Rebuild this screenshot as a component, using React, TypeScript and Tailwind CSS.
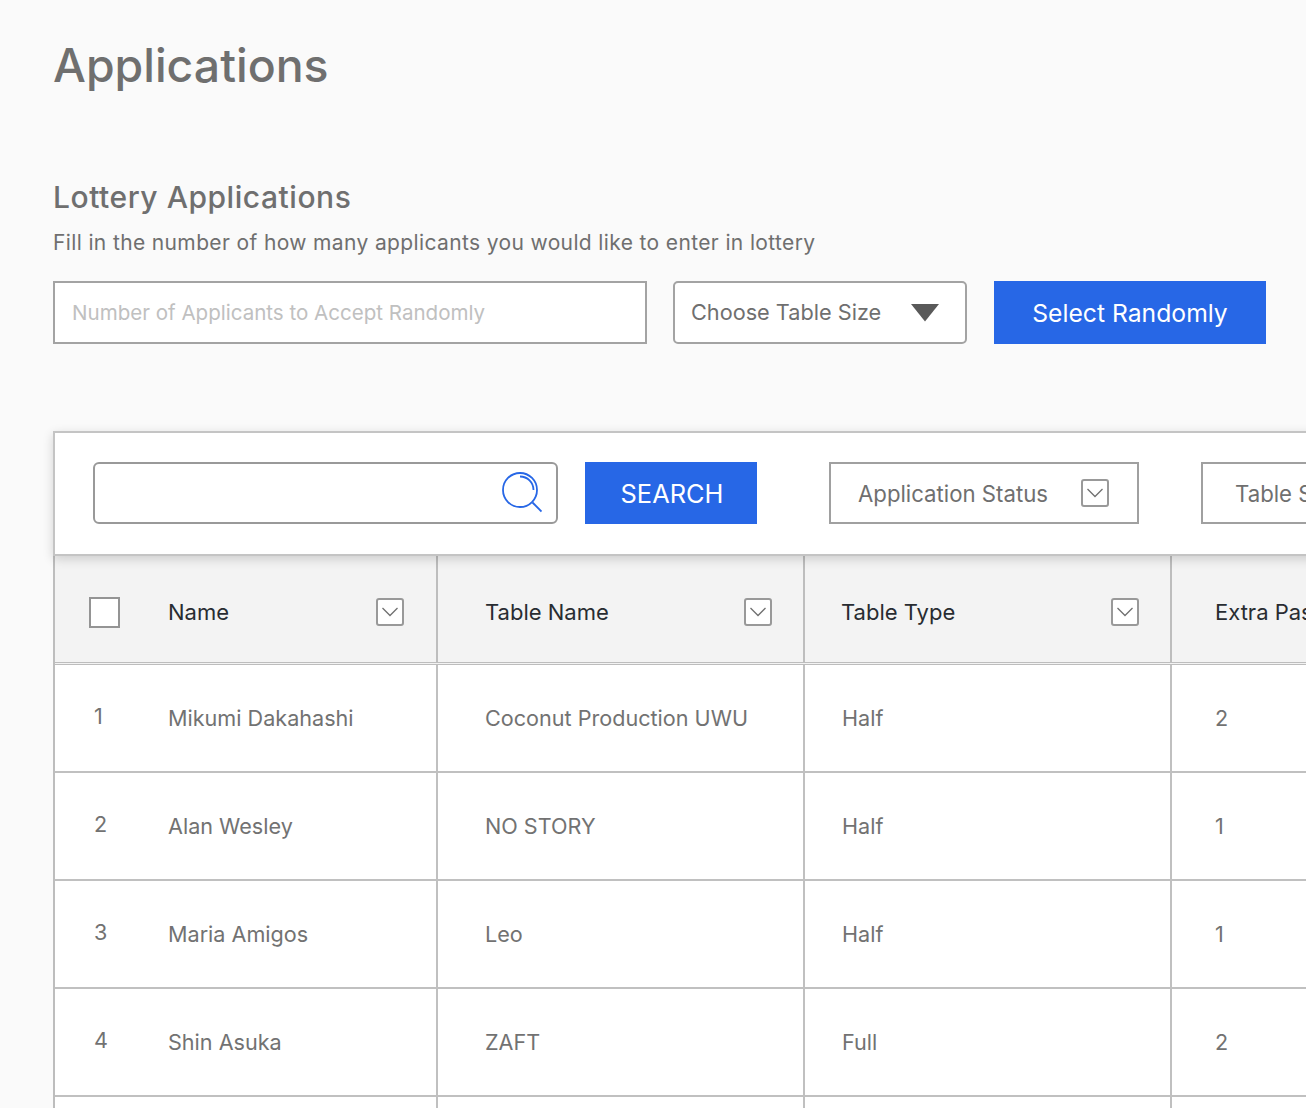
import { useState } from "react";

const rows = [
  { id: 1, name: "Mikumi Dakahashi", table: "Coconut Production UWU", type: "Half", extra: "2" },
  { id: 2, name: "Alan Wesley", table: "NO STORY", type: "Half", extra: "1" },
  { id: 3, name: "Maria Amigos", table: "Leo", type: "Half", extra: "1" },
  { id: 4, name: "Shin Asuka", table: "ZAFT", type: "Full", extra: "2" },
  { id: 5, name: "", table: "", type: "", extra: "" },
];

function Caret() {
  return (
    <span className="flex h-7 w-7 shrink-0 items-center justify-center rounded-[3px] border-2 border-[#999999] bg-white">
      <svg width="16" height="10" viewBox="0 0 16 10" fill="none">
        <path d="M0.500 1 8 8.500 15.500 1" stroke="#707070" strokeWidth="1.300" />
      </svg>
    </span>
  );
}

function Filter({ label, className }: { label: string; className: string }) {
  return (
    <div className={`flex h-[62px] shrink-0 items-center justify-between border-2 border-[#a0a0a0] bg-white pr-[28px] text-[22.200px] text-[#6f6f6f] ${className}`}>
      <span className="whitespace-nowrap pt-[3px]">{label}</span>
      <Caret />
    </div>
  );
}

export default function App() {
  const [count, setCount] = useState("");

  return (
    <div className="h-[1108px] w-[1306px] overflow-hidden bg-[#fafafa] pl-[53px] pt-[35px] font-['Inter',sans-serif] text-[#6f6f6f]">
      <h1 className="text-[46.400px] leading-[60px] font-[450]">Applications</h1>

      <h2 className="mt-[83px] text-[30px] leading-[38px] font-[450] tracking-[0.018em]">Lottery Applications</h2>
      <p className="mt-[12px] text-[21px] leading-[30px] tracking-[0.0175em]">
        Fill in the number of how many applicants you would like to enter in lottery
      </p>

      <div className="mt-[23px] flex h-[63px] w-[1213px] items-stretch">
        <input
          value={count}
          onChange={(e) => setCount(e.target.value)}
          placeholder="Number of Applicants to Accept Randomly"
          className="w-[594px] border-2 border-[#a3a3a3] bg-white px-[17px] pt-[2px] text-[20.550px] outline-none placeholder:text-[#c0c0c0]"
        />
        <div className="ml-[26px] flex w-[294px] items-center justify-between rounded-[5px] border-2 border-[#a3a3a3] bg-white pl-[16px] pr-[26px] text-[21.700px]">
          <span className="whitespace-nowrap">Choose Table Size</span>
          <svg width="28" height="19" viewBox="0 0 28 19">
            <path d="M0 1h28L14 18.500z" fill="#595959" />
          </svg>
        </div>
        <button className="ml-[27px] w-[272px] bg-[#2767e6] pt-[3px] text-[24.700px] text-white">Select Randomly</button>
      </div>

      <div className="mt-[87px] w-[1560px] border-l-2 border-[#bdbdbd]">
        <div className="relative z-10 -ml-[2px] flex h-[125px] items-center border-l-2 border-t-2 border-b-2 border-[#c4c4c4] bg-white pb-[2px] pl-[38px] shadow-[0_3px_10px_rgba(0,0,0,0.16)]">
          <div className="flex h-[62px] w-[465px] items-center justify-end rounded-[6px] border-2 border-[#999999] pr-[14px]">
            <svg width="42" height="42" viewBox="0 0 42 42" fill="none" stroke="#2767e6" strokeWidth="1.800">
              <circle cx="20" cy="18" r="17" />
              <path d="M20 4.500A13.500 13.500 0 0 1 33.500 18" />
              <path d="M32.500 30.500 41.500 39.500" />
            </svg>
          </div>
          <button className="ml-[27px] h-[62px] w-[172px] bg-[#2767e6] pl-[2px] pt-[4px] text-[25.400px] text-white">SEARCH</button>
          <Filter label="Application Status" className="ml-[72px] w-[310px] pl-[27px]" />
          <Filter label="Table Size" className="ml-[62px] w-[310px] pl-[32px]" />
        </div>

        <div className="grid h-[109px] grid-cols-[383px_367px_367px_367px] border-b-[3px] border-double border-[#bdbdbd] bg-[#f3f3f3] text-[22px] text-[#282c31]">
          <div className="flex items-center border-r-2 border-[#bdbdbd] pl-[34px] pr-[32px] pt-[6px]">
            <span className="h-[31px] w-[31px] shrink-0 border-2 border-[#949494] bg-white" />
            <span className="ml-[48px] flex-1">Name</span>
            <Caret />
          </div>
          <div className="flex items-center justify-between border-r-2 border-[#bdbdbd] pl-[47px] pr-[31px] pt-[6px]">
            <span>Table Name</span>
            <Caret />
          </div>
          <div className="flex items-center justify-between border-r-2 border-[#bdbdbd] pl-[36px] pr-[31px] pt-[6px]">
            <span>Table Type</span>
            <Caret />
          </div>
          <div className="flex items-center whitespace-nowrap pl-[43px] pt-[6px]">Extra Passes</div>
        </div>

        {rows.map((row) => (
          <div
            key={row.id}
            className="grid h-[108px] grid-cols-[383px_367px_367px_367px] border-b-2 border-[#c0c0c0] bg-white text-[21.600px] text-[#727272]"
          >
            <div className="flex items-center border-r-2 border-[#c0c0c0]">
              <span className="w-[113px] pl-[39px] pb-[3px]">{row.name ? row.id : ""}</span>
              <span>{row.name}</span>
            </div>
            <div className="flex items-center border-r-2 border-[#c0c0c0] pl-[47px]">{row.table}</div>
            <div className="flex items-center border-r-2 border-[#c0c0c0] pl-[37px]">{row.type}</div>
            <div className="flex items-center pl-[43px]">{row.extra}</div>
          </div>
        ))}
      </div>
    </div>
  );
}
